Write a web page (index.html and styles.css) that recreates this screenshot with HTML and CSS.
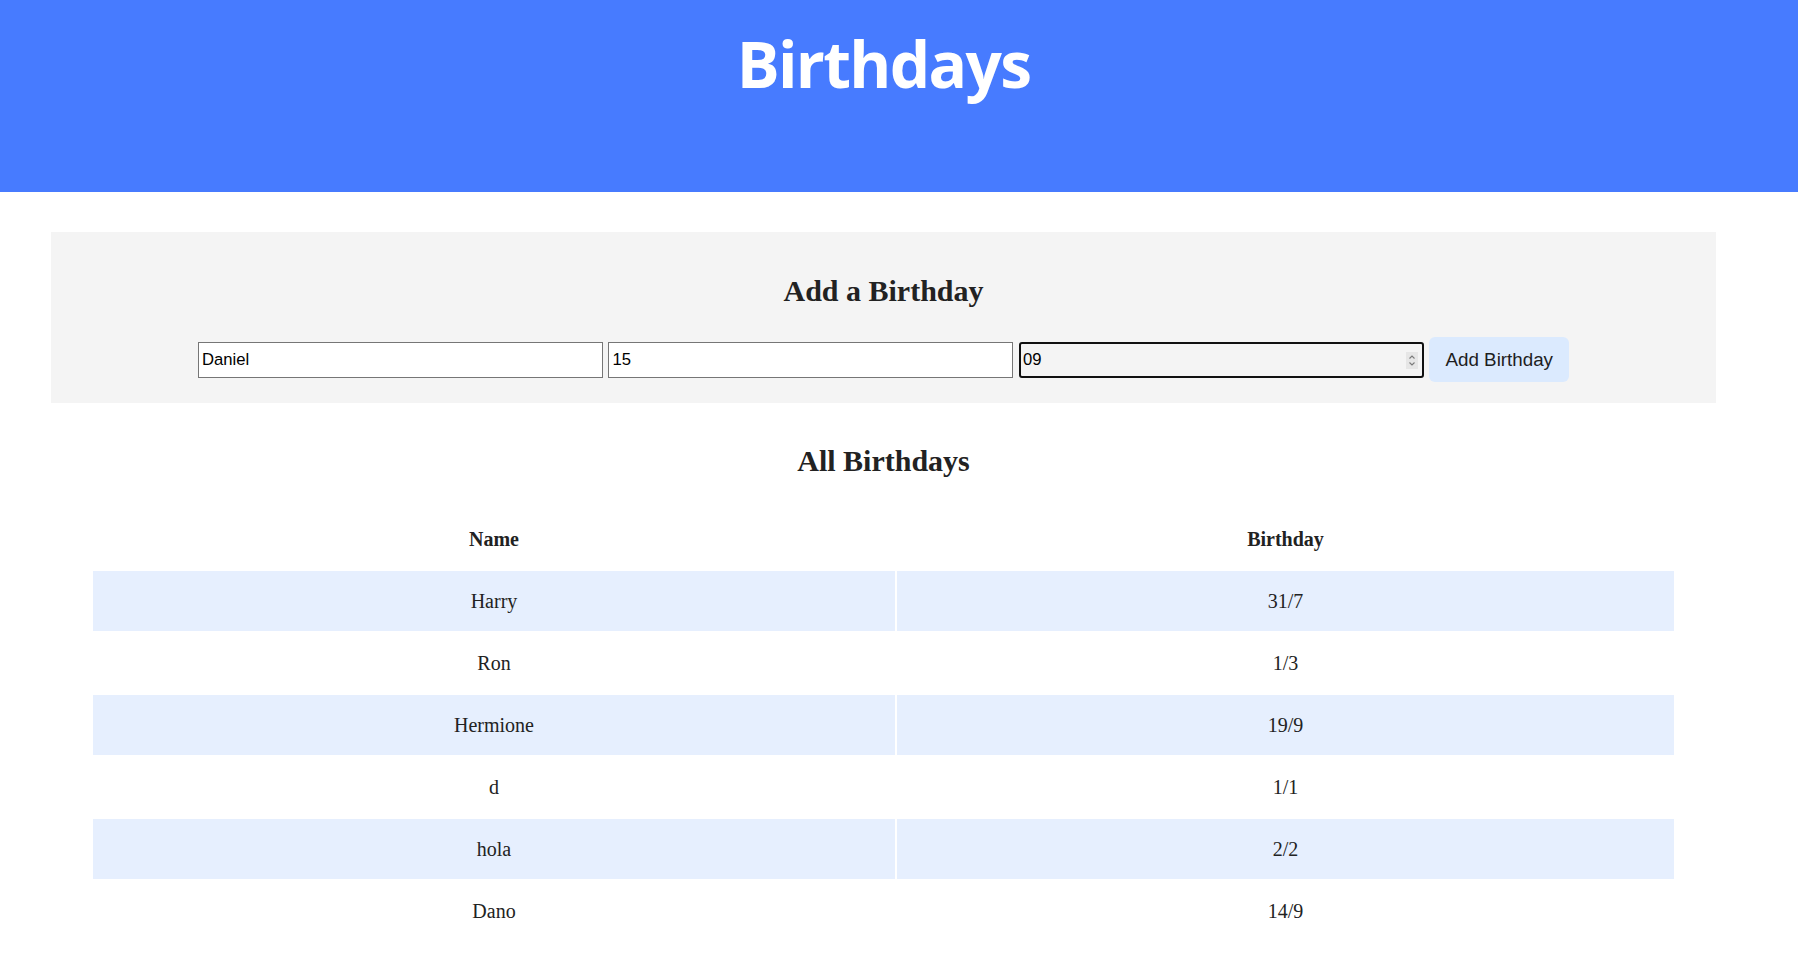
FILE: index.html
```html
<!DOCTYPE html>
<html lang="en">
<head>
<meta charset="utf-8">
<title>Birthdays</title>
<link rel="stylesheet" href="styles.css">
</head>
<body>
<header class="site-header">
  <h1 class="site-title">Birthdays</h1>
</header>
<main class="page">
  <section class="add-box">
    <h2 class="section-title">Add a Birthday</h2>
    <form class="form-row">
      <input class="field" type="text" name="name" value="Daniel">
      <input class="field" type="text" name="day" value="15">
      <span class="field-wrap">
        <input class="field field-focused" type="text" name="month" value="09">
        <svg class="spinner" width="12" height="17" viewBox="0 0 12 17" aria-hidden="true">
          <rect x="0" y="0" width="12" height="17" fill="#e6e6e6"/>
          <path d="M3.5 6.5 L6 4 L8.5 6.5" fill="none" stroke="#7a7a7a" stroke-width="1.1"/>
          <path d="M3.5 10.5 L6 13 L8.5 10.5" fill="none" stroke="#7a7a7a" stroke-width="1.1"/>
        </svg>
      </span>
      <button class="add-btn" type="button">Add Birthday</button>
    </form>
  </section>

  <h2 class="section-title list-title">All Birthdays</h2>
  <table class="bday-table">
    <thead>
      <tr><th class="col-name">Name</th><th>Birthday</th></tr>
    </thead>
    <tbody>
      <tr><td>Harry</td><td>31/7</td></tr>
      <tr><td>Ron</td><td>1/3</td></tr>
      <tr><td>Hermione</td><td>19/9</td></tr>
      <tr><td>d</td><td>1/1</td></tr>
      <tr><td>hola</td><td>2/2</td></tr>
      <tr><td>Dano</td><td>14/9</td></tr>
    </tbody>
  </table>
</main>
</body>
</html>
```

FILE: styles.css
```css
html, body {
  margin: 0;
  padding: 0;
  background: #ffffff;
}

body {
  font-family: "Liberation Serif", "Times New Roman", serif;
  font-size: 20px;
  color: #222222;
}

.site-header {
  background: #477bff;
  height: 192px;
  box-sizing: border-box;
  padding: 32px 31px 0 0;
}

.site-title {
  margin: 0;
  text-align: center;
  font-family: "Open Sans", "Liberation Sans", sans-serif;
  font-weight: 700;
  font-size: 64px;
  line-height: 64px;
  color: #ffffff;
  letter-spacing: -1.7px;
}

.page {
  width: 1767px;
  padding-top: 40px;
}

.add-box {
  margin: 0 51px;
  background: #f4f4f4;
  padding: 42px 0 21px;
}

.section-title {
  margin: 0;
  text-align: center;
  font-size: 30px;
  line-height: 34px;
  font-weight: 700;
  color: #222222;
}

.add-box .section-title {
  margin-bottom: 29px;
}

.form-row {
  display: flex;
  justify-content: center;
  align-items: center;
  gap: 5.5px;
  margin: 0;
}

.field {
  width: 405px;
  height: 36px;
  box-sizing: border-box;
  border: 1px solid #767676;
  border-radius: 0;
  background: #ffffff;
  padding: 0 3px;
  font-family: "Liberation Sans", Arial, sans-serif;
  font-size: 16.67px;
  color: #000000;
  outline: none;
}

.field-wrap {
  position: relative;
  display: block;
}

.field-focused {
  display: block;
  border: 2px solid #101010;
  border-radius: 3px;
  background: transparent;
  padding: 0 2px;
}

.spinner {
  position: absolute;
  right: 6px;
  top: 10px;
}

.add-btn {
  height: 45px;
  padding: 0 16px;
  border: none;
  border-radius: 6px;
  background: #dbeafe;
  font-family: "Liberation Sans", Arial, sans-serif;
  font-size: 18.8px;
  color: #1e1e1e;
  cursor: pointer;
}

.list-title {
  margin-top: 41px;
  margin-bottom: 29px;
}

.bday-table {
  width: 1585px;
  margin: 0 auto;
  table-layout: fixed;
  border-collapse: separate;
  border-spacing: 2px;
}

.bday-table th,
.bday-table td {
  padding: 18px 0;
  line-height: 24px;
  text-align: center;
  font-size: 20px;
}

.bday-table th {
  font-weight: 700;
}

.col-name {
  width: 802px;
}

.bday-table tbody tr:nth-child(odd) td {
  background: #e6effe;
}
```
